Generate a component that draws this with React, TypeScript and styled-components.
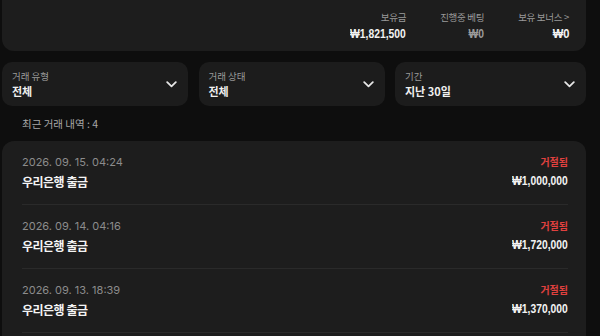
import React from "react";
import styled, { createGlobalStyle } from "styled-components";

const Global = createGlobalStyle`
  html, body { margin: 0; padding: 0; background: #0e0e0e; }
  body { font-family: "Noto Sans CJK KR", "Noto Sans", sans-serif; color: #fff; overflow: hidden; }
`;

const Page = styled.div`
  width: 600px;
  height: 336px;
  padding: 0 14px 0 2px;
  box-sizing: border-box;
  display: flex;
  flex-direction: column;
  background: #0e0e0e;
  overflow: hidden;
  & > * { flex-shrink: 0; }
`;

const BalanceBar = styled.div`
  height: 51px;
  background: #1d1d1d;
  border-radius: 0 0 12px 12px;
  display: flex;
  justify-content: flex-end;
  align-items: center;
  gap: 34px;
  padding: 0 17px 0 0;
  box-sizing: border-box;
`;

const BalanceCol = styled.div`
  display: flex;
  flex-direction: column;
  align-items: flex-end;
  gap: 3px;
`;

const BalanceLabel = styled.div`
  font-size: 9.5px;
  color: #9a9a9a;
  line-height: 13px;
  letter-spacing: -0.3px;
`;

const Money = styled.div<{ $dim?: boolean; $size?: number }>`
  font-family: "Liberation Sans", "Arimo", sans-serif;
  font-weight: 700;
  font-size: ${(p) => p.$size ?? 12}px;
  line-height: 14px;
  color: ${(p) => (p.$dim ? "#9a9a9a" : "#f2f2f2")};
  transform: scaleX(0.86);
  transform-origin: right center;
  white-space: nowrap;
`;

const Filters = styled.div`
  margin-top: 11px;
  display: grid;
  grid-template-columns: 186px 186px 191px;
  gap: 10px 10.5px;
`;

const FilterBox = styled.div`
  height: 44px;
  background: #1c1c1c;
  border-radius: 10px;
  display: flex;
  align-items: center;
  justify-content: space-between;
  padding: 0 11px 0 10px;
  box-sizing: border-box;
`;

const FilterText = styled.div`
  display: flex;
  flex-direction: column;
  gap: 1px;
`;

const FilterLabel = styled.div`
  font-size: 9.5px;
  color: #9a9a9a;
  line-height: 13px;
`;

const FilterValue = styled.div`
  font-size: 11px;
  font-weight: 700;
  color: #f0f0f0;
  line-height: 15px;
`;

const Count = styled.div`
  margin: 11px 0 0 20px;
  font-size: 10.5px;
  color: #a8a8a8;
  line-height: 14px;
`;

const List = styled.div`
  margin-top: 10px;
  background: #1d1d1d;
  border-radius: 12px;
  padding: 0 18px 40px 20px;
`;

const Row = styled.div`
  display: flex;
  justify-content: space-between;
  padding: 14px 0 0;
  border-bottom: 1px solid #2a2a2a;
  height: 64px;
  box-sizing: border-box;
`;

const Side = styled.div<{ $right?: boolean }>`
  display: flex;
  flex-direction: column;
  align-items: ${(p) => (p.$right ? "flex-end" : "flex-start")};
  gap: 5px;
`;

const DateText = styled.div`
  font-family: "Inter", "Noto Sans", sans-serif;
  font-size: 11px;
  color: #8c8c8c;
  line-height: 14px;
`;

const Title = styled.div`
  font-size: 12px;
  font-weight: 700;
  color: #f4f4f4;
  letter-spacing: -0.5px;
  line-height: 16px;
`;

const Status = styled.div`
  font-size: 10px;
  font-weight: 700;
  color: #e0413f;
  line-height: 14px;
`;

const Chevron = () => (
  <svg width="11" height="7" viewBox="0 0 11 7" fill="none">
    <path d="M1.2 1.2 L5.5 5.3 L9.8 1.2" stroke="#e6e6e6" strokeWidth="1.8" strokeLinecap="round" strokeLinejoin="round" />
  </svg>
);

const filters = [
  { label: "거래 유형", value: "전체" },
  { label: "거래 상태", value: "전체" },
  { label: "기간", value: "지난 30일" },
];

const rows = [
  { date: "2026. 09. 15. 04:24", amount: "₩1,000,000" },
  { date: "2026. 09. 14. 04:16", amount: "₩1,720,000" },
  { date: "2026. 09. 13. 18:39", amount: "₩1,370,000" },
];

export default function App() {
  return (
    <>
      <Global />
      <Page>
        <BalanceBar>
          <BalanceCol>
            <BalanceLabel>보유금</BalanceLabel>
            <Money>₩1,821,500</Money>
          </BalanceCol>
          <BalanceCol>
            <BalanceLabel>진행중 베팅</BalanceLabel>
            <Money $dim>₩0</Money>
          </BalanceCol>
          <BalanceCol>
            <BalanceLabel>보유 보너스 &gt;</BalanceLabel>
            <Money $size={13}>₩0</Money>
          </BalanceCol>
        </BalanceBar>
        <Filters>
          {filters.map((f) => (
            <FilterBox key={f.label}>
              <FilterText>
                <FilterLabel>{f.label}</FilterLabel>
                <FilterValue>{f.value}</FilterValue>
              </FilterText>
              <Chevron />
            </FilterBox>
          ))}
        </Filters>
        <Count>최근 거래 내역 : 4</Count>
        <List>
          {rows.map((r) => (
            <Row key={r.date}>
              <Side>
                <DateText>{r.date}</DateText>
                <Title>우리은행 출금</Title>
              </Side>
              <Side $right>
                <Status>거절됨</Status>
                <Money>{r.amount}</Money>
              </Side>
            </Row>
          ))}
        </List>
      </Page>
    </>
  );
}
